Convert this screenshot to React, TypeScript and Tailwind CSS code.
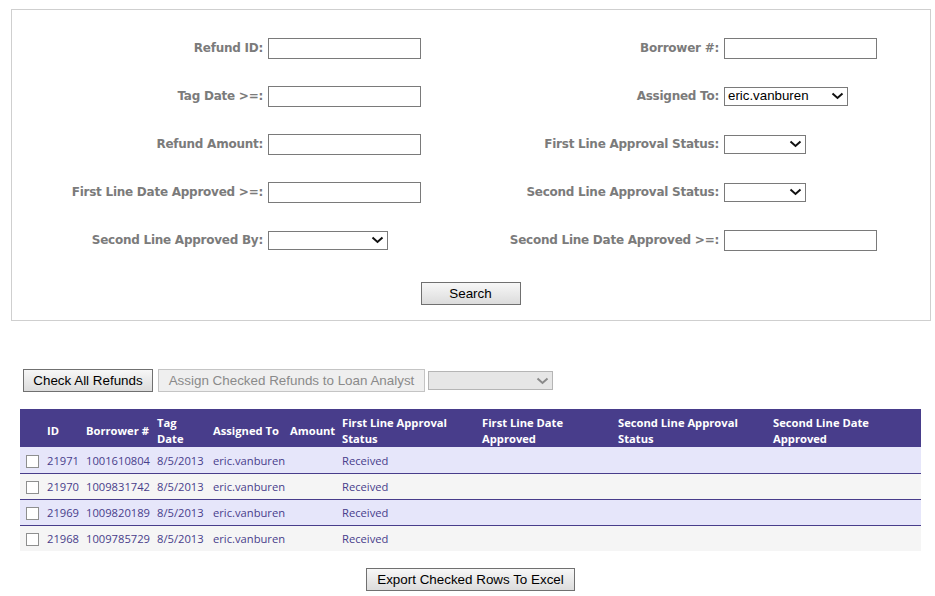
import React from "react";

const labelCls =
  "text-right text-[12px] font-bold tracking-[-0.25px] text-[#7b7b7b] [font-family:'DejaVu_Sans',Verdana,sans-serif]";

function TextBox() {
  return <div className="h-[21px] w-[153px] border border-[#7a7a7a] bg-white" />;
}

function Chevron({ color = "#111" }: { color?: string }) {
  return (
    <svg width="13" height="8" viewBox="0 0 13 8" className="shrink-0">
      <path d="M1.5 1.5 L6.5 6 L11.5 1.5" fill="none" stroke={color} strokeWidth="2" />
    </svg>
  );
}

function Select({ width, value }: { width: string; value?: string }) {
  return (
    <div
      className={`flex h-[19px] ${width} items-center justify-between border border-[#7a7a7a] bg-white pl-[3px] pr-[3px] text-[13.3px] text-black [font-family:'Liberation_Sans',Arial,sans-serif]`}
    >
      <span>{value}</span>
      <Chevron />
    </div>
  );
}

function Btn({ width, children }: { width: string; children: React.ReactNode }) {
  return (
    <button
      className={`h-[23px] ${width} border border-[#707070] bg-linear-to-b from-[#f7f7f7] to-[#dcdcdc] pt-[1px] text-[13.4px] text-black [font-family:'Liberation_Sans',Arial,sans-serif]`}
    >
      {children}
    </button>
  );
}

const fields: [string, React.ReactNode, string, React.ReactNode][] = [
  ["Refund ID:", <TextBox />, "Borrower #:", <TextBox />],
  ["Tag Date >=:", <TextBox />, "Assigned To:", <Select width="w-[124px]" value="eric.vanburen" />],
  ["Refund Amount:", <TextBox />, "First Line Approval Status:", <Select width="w-[82px]" />],
  ["First Line Date Approved >=:", <TextBox />, "Second Line Approval Status:", <Select width="w-[82px]" />],
  ["Second Line Approved By:", <Select width="w-[120px]" />, "Second Line Date Approved >=:", <TextBox />],
];

const rows = [
  ["21971", "1001610804"],
  ["21970", "1009831742"],
  ["21969", "1009820189"],
  ["21968", "1009785729"],
];

const headers = [
  "ID",
  "Borrower #",
  "Tag Date",
  "Assigned To",
  "Amount",
  "First Line Approval Status",
  "First Line Date Approved",
  "Second Line Approval Status",
  "Second Line Date Approved",
];

export default function App() {
  return (
    <div className="min-h-[596px] bg-white pb-[5px]">
      {/* search form */}
      <div className="ml-[11px] mt-[9px] w-[920px] border border-[#cfcfcf] pb-[15px] pt-[14px]">
        <div className="grid grid-cols-[251px_197px_249px_1fr] gap-x-[5px]">
          {fields.map(([l1, c1, l2, c2]) => (
            <React.Fragment key={l1}>
              <div className={`flex h-[48px] items-center justify-end ${labelCls}`}>{l1}</div>
              <div className="flex h-[48px] items-center">{c1}</div>
              <div className={`flex h-[48px] items-center justify-end ${labelCls}`}>{l2}</div>
              <div className="flex h-[48px] items-center">{c2}</div>
            </React.Fragment>
          ))}
        </div>
        <div className="mt-[18px] flex justify-center pr-[1px]">
          <Btn width="w-[100px]">Search</Btn>
        </div>
      </div>

      {/* actions */}
      <div className="ml-[23px] mt-[48px] flex items-center">
        <Btn width="w-[130px]">Check All Refunds</Btn>
        <button className="ml-[5px] h-[23px] w-[267px] border border-[#c4c4c4] bg-[#efefef] pt-[1px] text-[13.4px] text-[#8a8a8a] [font-family:'Liberation_Sans',Arial,sans-serif]">
          Assign Checked Refunds to Loan Analyst
        </button>
        <div className="ml-[3px] flex h-[19px] w-[125px] items-center justify-end border border-[#b5b5b5] bg-[#e6e6e6] pr-[3px]">
          <Chevron color="#8a8a8a" />
        </div>
      </div>

      {/* results */}
      <table className="ml-[20px] mt-[17px] w-[901px] table-fixed border-collapse text-[11.2px] [font-family:'Open_Sans',sans-serif]">
        <colgroup>
          <col className="w-[23px]" />
          <col className="w-[39px]" />
          <col className="w-[71px]" />
          <col className="w-[56px]" />
          <col className="w-[77px]" />
          <col className="w-[52px]" />
          <col className="w-[140px]" />
          <col className="w-[136px]" />
          <col className="w-[155px]" />
          <col className="w-[152px]" />
        </colgroup>
        <thead>
          <tr className="h-[38px] bg-[#483d8b] text-left leading-[16px] text-white">
            <th />
            {headers.map((h) => (
              <th key={h} className="whitespace-normal px-[4px] pb-[0px] pt-[5px] align-middle font-bold">
                {h}
              </th>
            ))}
          </tr>
        </thead>
        <tbody className="text-[#483d8b]">
          {rows.map(([id, borrower], i) => (
            <tr
              key={id}
              className={`h-[26px] ${i % 2 === 0 ? "bg-[#e6e6fa]" : "bg-[#f5f5f5]"} ${
                i < rows.length - 1 ? "border-b border-[#483d8b]" : ""
              }`}
            >
              <td className="pl-[6px] pt-[3px]">
                <input
                  type="checkbox"
                  className="block h-[13px] w-[13px] appearance-none border border-[#8e8f8f] bg-white"
                />
              </td>
              <td className="px-[4px] pt-[3px]">{id}</td>
              <td className="px-[4px] pt-[3px]">{borrower}</td>
              <td className="px-[4px] pt-[3px]">8/5/2013</td>
              <td className="px-[4px] pt-[3px]">eric.vanburen</td>
              <td className="px-[4px]" />
              <td className="px-[4px] pt-[3px]">Received</td>
              <td />
              <td />
              <td />
            </tr>
          ))}
        </tbody>
      </table>

      <div className="ml-[20px] mt-[17px] flex w-[901px] justify-center">
        <Btn width="w-[209px]">Export Checked Rows To Excel</Btn>
      </div>
    </div>
  );
}
